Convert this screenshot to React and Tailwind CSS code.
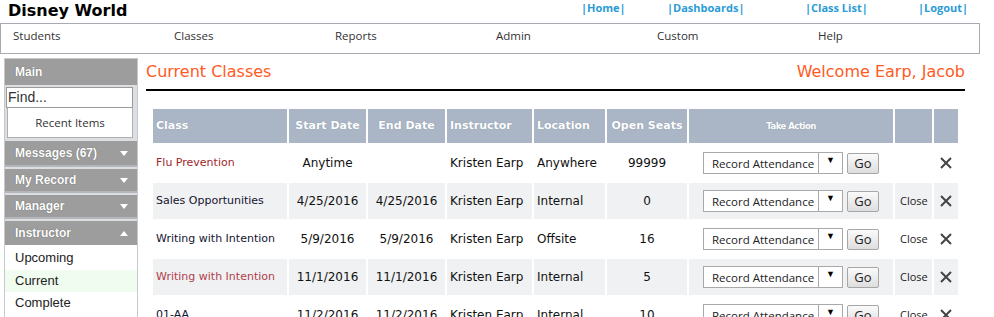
import React from "react";

const rows = [
  { cls: "Flu Prevention", clsColor: "text-[#a0282a]", start: "Anytime", end: "", inst: "Kristen Earp", loc: "Anywhere", seats: "99999", close: false, alt: false },
  { cls: "Sales Opportunities", clsColor: "text-[#141430]", start: "4/25/2016", end: "4/25/2016", inst: "Kristen Earp", loc: "Internal", seats: "0", close: true, alt: true },
  { cls: "Writing with Intention", clsColor: "text-[#141430]", start: "5/9/2016", end: "5/9/2016", inst: "Kristen Earp", loc: "Offsite", seats: "16", close: true, alt: false },
  { cls: "Writing with Intention", clsColor: "text-[#b0404a]", start: "11/1/2016", end: "11/1/2016", inst: "Kristen Earp", loc: "Internal", seats: "5", close: true, alt: true },
  { cls: "01-AA", clsColor: "text-[#141430]", start: "11/2/2016", end: "11/2/2016", inst: "Kristen Earp", loc: "Internal", seats: "10", close: true, alt: false },
];

function Tri({ up }) {
  return (
    <svg width="8" height="5" viewBox="0 0 8 5" className="mr-[9px]">
      {up ? <polygon points="0,5 8,5 4,0" fill="#fff" /> : <polygon points="0,0 8,0 4,5" fill="#fff" />}
    </svg>
  );
}

function SideHead({ label, up, h = "h-[24px]", mb = "mb-[3px]" }) {
  return (
    <div className={"bg-[#9d9d9d] flex items-center justify-between pl-[10px] border-b-[2px] border-[#b3b6bb] " + h + " " + mb}>
      <span className="text-white font-bold text-[12px] font-['Liberation_Sans',Arial,sans-serif] [text-shadow:0_0_1px_#555]">{label}</span>
      <Tri up={up} />
    </div>
  );
}

function XIcon() {
  return (
    <svg width="12" height="12" viewBox="0 0 12 12">
      <path d="M1 1 L11 11 M11 1 L1 11" stroke="#444" strokeWidth="2" strokeLinecap="butt" />
    </svg>
  );
}

export default function App() {
  const sans = "font-['Open_Sans',sans-serif]";
  const dv = "font-['DejaVu_Sans',Verdana,sans-serif]";
  return (
    <div className="w-[994px] h-[317px] overflow-hidden bg-white relative">
      {/* top header */}
      <div className="h-[23px] flex items-start">
        <div className={"pl-[8px] w-[581px] text-[16px] font-bold leading-[22px] text-black " + dv}>Disney World</div>
        <div className={"flex text-[11px] font-bold leading-[16px] text-[#2a9bd6] " + sans}>
          <span className="w-[86px]">|Home|</span>
          <span className="w-[138px]">|Dashboards|</span>
          <span className="w-[113px]">|Class List|</span>
          <span>|Logout|</span>
        </div>
      </div>
      {/* nav */}
      <div className={"w-[980px] h-[31px] border border-[#a9a9b1] flex pl-[12px] pt-[4px] text-[11.5px] text-[#333] leading-[16px] " + sans}>
        {["Students", "Classes", "Reports", "Admin", "Custom", "Help"].map((n) => (
          <div key={n} className="w-[162px]">{n}</div>
        ))}
      </div>
      {/* body */}
      <div className="flex items-start">
        {/* sidebar */}
        <div className="ml-[4px] mt-[4px] w-[134px] h-[300px] border border-[#c5c8cc] bg-[#dcdee2] flex flex-col">
          <div className="h-[26px] shrink-0 bg-[#9d9d9d] flex items-center pl-[10px]">
            <span className="text-white font-bold text-[12px] font-['Liberation_Sans',Arial,sans-serif] [text-shadow:0_0_1px_#555]">Main</span>
          </div>
          <div className="mt-[2px] ml-[1px] shrink-0 w-[127px] h-[21px] border border-[#9a9a9a] bg-white flex items-center pl-[1px] text-[14px] text-[#333] font-['Liberation_Sans',Arial,sans-serif]">Find...</div>
          <div className={"ml-[2px] shrink-0 w-[126px] h-[30px] border border-[#aeb0b4] border-t-0 bg-white flex items-center justify-center text-[11.5px] text-[#333] " + sans}>Recent Items</div>
          <div className="h-[3px] shrink-0" />
          <SideHead label="Messages (67)" h="h-[26px]" mb="mb-[2px]" />
          <SideHead label="My Record" h="h-[24px]" mb="mb-[2px]" />
          <SideHead label="Manager" h="h-[24px]" mb="mb-[2px]" />
          <div className="h-[24px] shrink-0 bg-[#9d9d9d] flex items-center justify-between pl-[10px]">
            <span className="text-white font-bold text-[12px] font-['Liberation_Sans',Arial,sans-serif] [text-shadow:0_0_1px_#555]">Instructor</span>
            <Tri up />
          </div>
          <div className="flex-1 bg-white font-['Liberation_Sans',Arial,sans-serif] text-[13px] text-[#222]">
            <div className="h-[25px] flex items-center pl-[10px] pt-[1px]">Upcoming</div>
            <div className="h-[22px] flex items-center pl-[10px] bg-[#effcef]">Current</div>
            <div className="h-[22px] flex items-center pl-[10px]">Complete</div>
          </div>
        </div>
        {/* main */}
        <div className="ml-[8px] w-[819px]">
          <div className={"h-[35px] flex justify-between items-start pt-[8px] text-[16px] leading-[20px] text-[#ff5a23] " + dv}>
            <span>Current Classes</span>
            <span>Welcome Earp, Jacob</span>
          </div>
          <div className="h-[2px] bg-black" />
          <table className="mt-[16px] ml-[5px] table-fixed border-separate border-spacing-[2px] w-[809px]">
            <colgroup>
              <col className="w-[134px]" />
              <col className="w-[77px]" />
              <col className="w-[77px]" />
              <col className="w-[85px]" />
              <col className="w-[71px]" />
              <col className="w-[80px]" />
              <col className="w-[204px]" />
              <col className="w-[37px]" />
              <col className="w-[24px]" />
            </colgroup>
            <thead>
              <tr className={"h-[34px] bg-[#aab6c6] text-white font-bold text-[11px] [text-shadow:0_0_1px_#7e8ba0] " + dv}>
                <th className="text-left pl-[3px] p-0 font-bold">Class</th>
                <th className="p-0 text-center font-bold">Start Date</th>
                <th className="p-0 text-center font-bold">End Date</th>
                <th className="p-0 text-left pl-[3px] font-bold">Instructor</th>
                <th className="p-0 text-left pl-[3px] font-bold">Location</th>
                <th className="p-0 text-center font-bold">Open Seats</th>
                <th className="p-0 text-center font-bold text-[8.5px] tracking-[-0.5px]">Take Action</th>
                <th className="p-0" />
                <th className="p-0" />
              </tr>
            </thead>
            <tbody>
              {rows.map((r, i) => (
                <tr key={i} className={"h-[36px] " + (r.alt ? "bg-[#f0f1f3]" : "bg-white")}>
                  <td className={"p-0 pl-[3px] text-[11px] " + dv + " " + r.clsColor}>{r.cls}</td>
                  <td className={"p-0 text-center text-[12px] text-[#111] " + dv}>{r.start}</td>
                  <td className={"p-0 text-center text-[12px] text-[#111] " + dv}>{r.end}</td>
                  <td className={"p-0 pl-[3px] text-[12px] text-[#111] whitespace-nowrap " + dv}>{r.inst}</td>
                  <td className={"p-0 pl-[3px] text-[12px] text-[#111] " + dv}>{r.loc}</td>
                  <td className={"p-0 text-center text-[12px] text-[#111] " + dv}>{r.seats}</td>
                  <td className="p-0">
                    <div className="flex items-center pl-[14px]">
                      <div className="w-[140px] h-[22px] border border-[#a9a9a9] bg-white flex">
                        <div className={"w-[115px] border-r border-[#a9a9a9] pl-[8px] pt-[3px] text-[11.5px] leading-[16px] text-[#222] whitespace-nowrap " + sans}>Record Attendance</div>
                        <div className="flex-1 flex justify-center pt-[2px] text-[9px] leading-[10px] text-black">▼</div>
                      </div>
                      <div className={"ml-[4px] w-[32px] h-[21px] border border-[#a6a6a6] rounded-[2px] bg-gradient-to-b from-[#fafafa] to-[#dedede] flex items-center justify-center text-[13px] text-[#222] leading-[16px] " + sans}>Go</div>
                    </div>
                  </td>
                  <td className={"p-0 pl-[5px] text-[11px] text-[#222] " + sans}>{r.close ? "Close" : ""}</td>
                  <td className="p-0">
                    <div className="flex justify-center"><XIcon /></div>
                  </td>
                </tr>
              ))}
            </tbody>
          </table>
        </div>
      </div>
    </div>
  );
}
